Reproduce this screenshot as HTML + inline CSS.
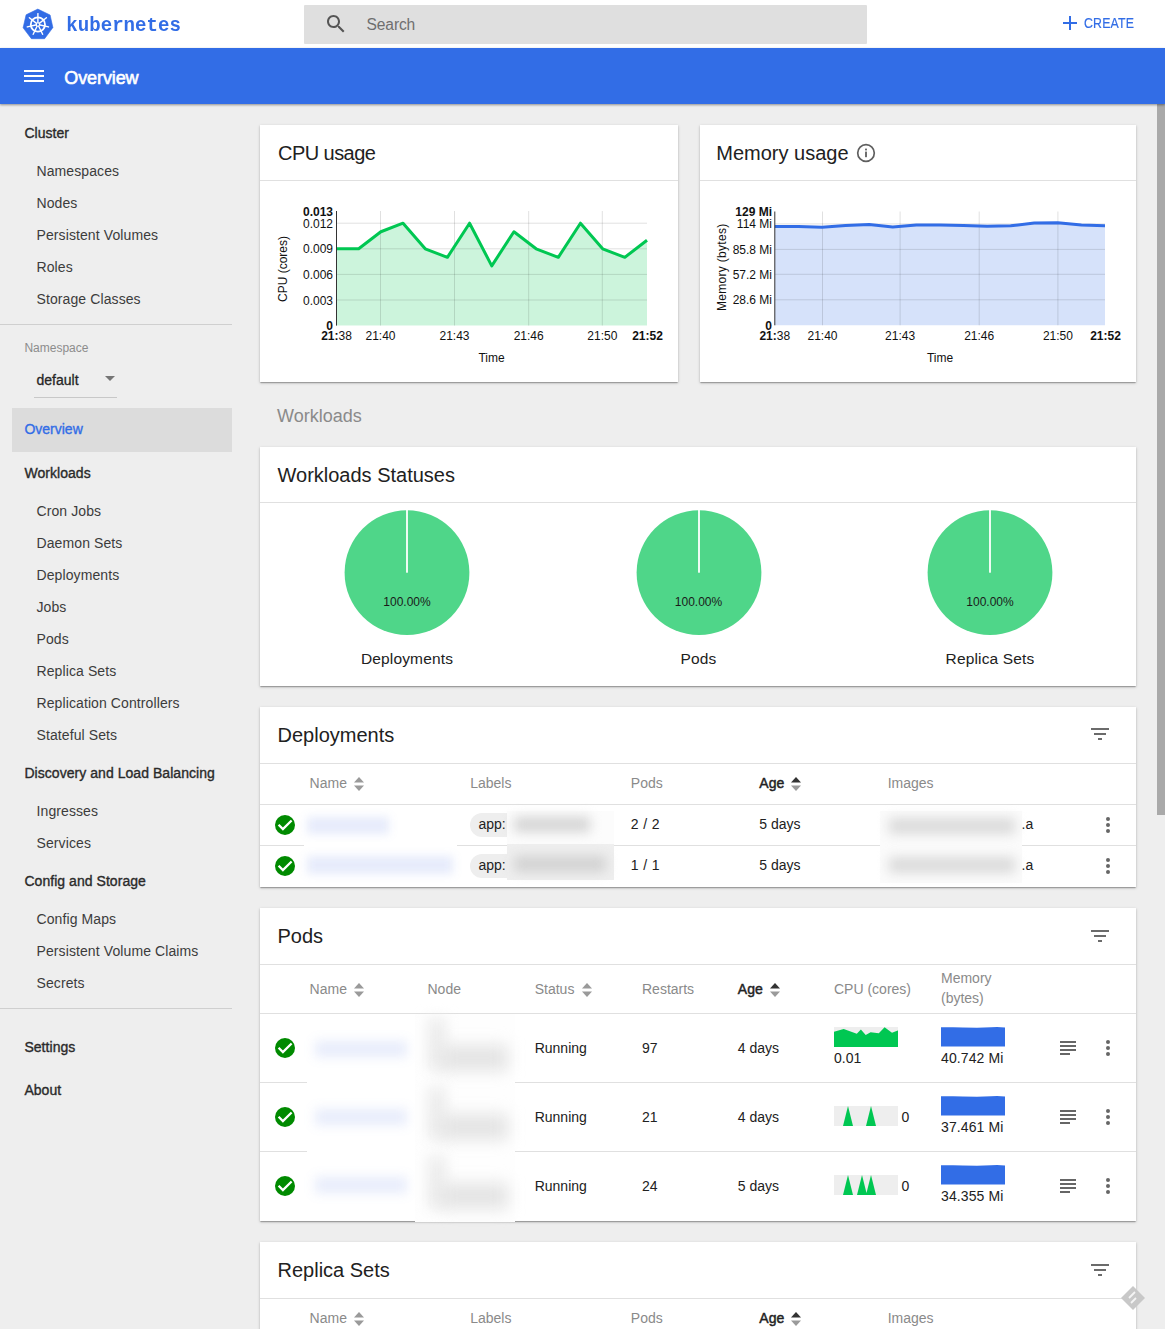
<!DOCTYPE html><html><head><meta charset="utf-8"><style>
html,body{margin:0;padding:0;}
body{width:1165px;height:1329px;overflow:hidden;position:relative;background:#eeeeee;font-family:"Liberation Sans", sans-serif;}
.t{position:absolute;white-space:nowrap;}
.r{position:absolute;}
.card{position:absolute;background:#fff;box-shadow:0 1px 3px 0 rgba(0,0,0,.2),0 1px 1px 0 rgba(0,0,0,.14),0 2px 1px -1px rgba(0,0,0,.12);}
svg{position:absolute;overflow:visible;}
</style></head><body>
<div class="r" style="left:0px;top:0px;width:1165px;height:48px;background:#fff;"></div><svg style="left:0;top:0" width="70" height="48" viewBox="0 0 70 48"><polygon points="37.8,9.1 50.1,15 52.9,27.6 44.6,38.7 31.4,38.7 23.1,27.8 26.1,14.8" fill="#326ce5" stroke="#326ce5" stroke-width="0.6" stroke-linejoin="round"/><g stroke="#fff" fill="none" stroke-linecap="round"><circle cx="37.9" cy="24.5" r="7.1" stroke-width="1.8"/><line x1="37.90" y1="22.30" x2="37.90" y2="13.60" stroke-width="1.4"/><line x1="39.62" y1="23.13" x2="46.42" y2="17.70" stroke-width="1.4"/><line x1="40.04" y1="24.99" x2="48.53" y2="26.93" stroke-width="1.4"/><line x1="38.85" y1="26.48" x2="42.63" y2="34.32" stroke-width="1.4"/><line x1="36.95" y1="26.48" x2="33.17" y2="34.32" stroke-width="1.4"/><line x1="35.76" y1="24.99" x2="27.27" y2="26.93" stroke-width="1.4"/><line x1="36.18" y1="23.13" x2="29.38" y2="17.70" stroke-width="1.4"/><circle cx="37.9" cy="24.5" r="1.6" stroke-width="1.3"/></g><circle cx="37.9" cy="24.5" r="0.9" fill="#326ce5"/></svg><div class="t" style="left:66.30px;top:14.25px;font-size:19.1px;line-height:25.1px;color:#326de6;font-weight:700;font-family:'Liberation Mono', monospace;transform:scaleY(1.06);transform-origin:0 80%;">kubernetes</div><div class="r" style="left:304px;top:5px;width:563px;height:39px;background:#dfdfdf;border-radius:1px;"></div><svg style="left:324px;top:12px" width="24" height="24" viewBox="0 0 24 24"><path fill="#555" d="M15.5 14h-.79l-.28-.27C15.41 12.59 16 11.11 16 9.5 16 5.91 13.09 3 9.5 3S3 5.91 3 9.5 5.91 16 9.5 16c1.61 0 3.09-.59 4.23-1.57l.27.28v.79l5 4.99L20.49 19l-4.99-5zm-6 0C7.01 14 5 11.99 5 9.5S7.01 5 9.5 5 14 7.01 14 9.5 11.99 14 9.5 14z"/></svg><div class="t" style="left:366.60px;top:13.70px;font-size:15.6px;line-height:21.6px;color:#6f6f6f;letter-spacing:-0.15px;">Search</div><div class="r" style="left:1062.5px;top:21.9px;width:14px;height:2px;background:#326de6;"></div><div class="r" style="left:1068.6px;top:15.9px;width:2px;height:14px;background:#326de6;"></div><div class="t" style="left:1084.30px;top:12.50px;font-size:14px;line-height:20px;color:#326de6;letter-spacing:0.2px;-webkit-text-stroke:0.2px #326de6;transform:scaleX(0.88);transform-origin:0 0;">CREATE</div><div class="r" style="left:0px;top:48px;width:1165px;height:56px;background:#326de6;box-shadow:0 1px 2px rgba(0,0,0,.3),0 1px 3px rgba(0,0,0,.12);z-index:2;"></div><div class="r" style="left:24.4px;top:70px;width:19.2px;height:2.1px;background:#fff;z-index:3;"></div><div class="r" style="left:24.4px;top:75px;width:19.2px;height:2.1px;background:#fff;z-index:3;"></div><div class="r" style="left:24.4px;top:80px;width:19.2px;height:2.1px;background:#fff;z-index:3;"></div><div class="t" style="left:64.30px;top:66.00px;font-size:18px;line-height:24px;color:#fff;letter-spacing:-0.1px;z-index:3;-webkit-text-stroke:0.6px #fff;">Overview</div><div class="r" style="left:1157px;top:104px;width:8px;height:711px;background:#a9a9a9;z-index:1;"></div><div class="t" style="left:24.40px;top:123.30px;font-size:14px;line-height:20px;color:#2a2a2a;letter-spacing:0.05px;-webkit-text-stroke:0.35px #2a2a2a;">Cluster</div><div class="t" style="left:36.50px;top:161.20px;font-size:14px;line-height:20px;color:#3c3c3c;letter-spacing:0.1px;">Namespaces</div><div class="t" style="left:36.50px;top:193.20px;font-size:14px;line-height:20px;color:#3c3c3c;letter-spacing:0.1px;">Nodes</div><div class="t" style="left:36.50px;top:225.20px;font-size:14px;line-height:20px;color:#3c3c3c;letter-spacing:0.1px;">Persistent Volumes</div><div class="t" style="left:36.50px;top:257.20px;font-size:14px;line-height:20px;color:#3c3c3c;letter-spacing:0.1px;">Roles</div><div class="t" style="left:36.50px;top:289.20px;font-size:14px;line-height:20px;color:#3c3c3c;letter-spacing:0.1px;">Storage Classes</div><div class="r" style="left:0px;top:324px;width:232px;height:1px;background:#cfcfcf;"></div><div class="t" style="left:24.40px;top:339.00px;font-size:12px;line-height:18px;color:#8c8c8c;">Namespace</div><div class="t" style="left:36.50px;top:370.20px;font-size:14px;line-height:20px;color:#262626;-webkit-text-stroke:0.3px #262626;">default</div><svg style="left:105px;top:376px" width="10" height="6"><polygon points="0,0 10,0 5,5" fill="#757575"/></svg><div class="r" style="left:34px;top:397px;width:83px;height:1px;background:#c8c8c8;"></div><div class="r" style="left:12px;top:408px;width:220px;height:43.5px;background:#dcdcdc;"></div><div class="t" style="left:24.40px;top:419.00px;font-size:14px;line-height:20px;color:#326de6;-webkit-text-stroke:0.35px #326de6;">Overview</div><div class="t" style="left:24.40px;top:462.90px;font-size:14px;line-height:20px;color:#2a2a2a;letter-spacing:0.05px;-webkit-text-stroke:0.35px #2a2a2a;">Workloads</div><div class="t" style="left:36.50px;top:500.80px;font-size:14px;line-height:20px;color:#3c3c3c;letter-spacing:0.1px;">Cron Jobs</div><div class="t" style="left:36.50px;top:532.80px;font-size:14px;line-height:20px;color:#3c3c3c;letter-spacing:0.1px;">Daemon Sets</div><div class="t" style="left:36.50px;top:564.80px;font-size:14px;line-height:20px;color:#3c3c3c;letter-spacing:0.1px;">Deployments</div><div class="t" style="left:36.50px;top:596.80px;font-size:14px;line-height:20px;color:#3c3c3c;letter-spacing:0.1px;">Jobs</div><div class="t" style="left:36.50px;top:628.80px;font-size:14px;line-height:20px;color:#3c3c3c;letter-spacing:0.1px;">Pods</div><div class="t" style="left:36.50px;top:660.80px;font-size:14px;line-height:20px;color:#3c3c3c;letter-spacing:0.1px;">Replica Sets</div><div class="t" style="left:36.50px;top:692.80px;font-size:14px;line-height:20px;color:#3c3c3c;letter-spacing:0.1px;">Replication Controllers</div><div class="t" style="left:36.50px;top:724.80px;font-size:14px;line-height:20px;color:#3c3c3c;letter-spacing:0.1px;">Stateful Sets</div><div class="t" style="left:24.40px;top:762.80px;font-size:14px;line-height:20px;color:#2a2a2a;letter-spacing:0.05px;-webkit-text-stroke:0.35px #2a2a2a;">Discovery and Load Balancing</div><div class="t" style="left:36.50px;top:800.80px;font-size:14px;line-height:20px;color:#3c3c3c;letter-spacing:0.1px;">Ingresses</div><div class="t" style="left:36.50px;top:832.80px;font-size:14px;line-height:20px;color:#3c3c3c;letter-spacing:0.1px;">Services</div><div class="t" style="left:24.40px;top:871.00px;font-size:14px;line-height:20px;color:#2a2a2a;letter-spacing:0.05px;-webkit-text-stroke:0.35px #2a2a2a;">Config and Storage</div><div class="t" style="left:36.50px;top:909.00px;font-size:14px;line-height:20px;color:#3c3c3c;letter-spacing:0.1px;">Config Maps</div><div class="t" style="left:36.50px;top:941.00px;font-size:14px;line-height:20px;color:#3c3c3c;letter-spacing:0.1px;">Persistent Volume Claims</div><div class="t" style="left:36.50px;top:973.00px;font-size:14px;line-height:20px;color:#3c3c3c;letter-spacing:0.1px;">Secrets</div><div class="r" style="left:0px;top:1008px;width:232px;height:1px;background:#cfcfcf;"></div><div class="t" style="left:24.40px;top:1036.50px;font-size:14px;line-height:20px;color:#2a2a2a;letter-spacing:0.05px;-webkit-text-stroke:0.35px #2a2a2a;">Settings</div><div class="t" style="left:24.40px;top:1079.80px;font-size:14px;line-height:20px;color:#2a2a2a;letter-spacing:0.05px;-webkit-text-stroke:0.35px #2a2a2a;">About</div><div class="card" style="left:260.3px;top:124.5px;width:418px;height:257px;"></div><div class="t" style="left:278.00px;top:139.80px;font-size:20px;line-height:26px;color:#212121;letter-spacing:-0.55px;">CPU usage</div><div class="r" style="left:260.3px;top:180px;width:418px;height:1px;background:#e0e0e0;"></div><div class="card" style="left:699.8px;top:124.5px;width:436.5px;height:257px;"></div><div class="t" style="left:716.30px;top:139.80px;font-size:20px;line-height:26px;color:#212121;">Memory usage</div><div class="r" style="left:699.8px;top:180px;width:436.5px;height:1px;background:#e0e0e0;"></div><svg style="left:856px;top:143px" width="20" height="20" viewBox="0 0 20 20"><circle cx="10" cy="10" r="8.3" fill="none" stroke="#5f5f5f" stroke-width="1.7"/><rect x="9.1" y="8.6" width="1.8" height="5.6" fill="#5f5f5f"/><rect x="9.1" y="5.6" width="1.8" height="1.8" fill="#5f5f5f"/></svg><svg style="left:0;top:0" width="1165" height="400"><path d="M336.50,248.80 L358.68,248.80 L380.86,231.73 L403.04,223.20 L425.21,248.80 L447.39,257.33 L469.57,223.20 L491.75,265.87 L513.93,231.73 L536.11,248.80 L558.29,257.33 L580.46,223.20 L602.64,248.80 L624.82,257.33 L647.00,240.27 L647.00,325.6 L336.50,325.6 Z" fill="rgba(0,199,82,0.2)"/><line x1="336.5" y1="300.0" x2="647" y2="300.0" stroke="rgba(0,0,0,0.12)" stroke-width="1"/><line x1="336.5" y1="274.40000000000003" x2="647" y2="274.40000000000003" stroke="rgba(0,0,0,0.12)" stroke-width="1"/><line x1="336.5" y1="248.8" x2="647" y2="248.8" stroke="rgba(0,0,0,0.12)" stroke-width="1"/><line x1="336.5" y1="223.20000000000002" x2="647" y2="223.20000000000002" stroke="rgba(0,0,0,0.12)" stroke-width="1"/><line x1="380.5" y1="211" x2="380.5" y2="325.6" stroke="rgba(0,0,0,0.12)" stroke-width="1"/><line x1="454.5" y1="211" x2="454.5" y2="325.6" stroke="rgba(0,0,0,0.12)" stroke-width="1"/><line x1="528.7" y1="211" x2="528.7" y2="325.6" stroke="rgba(0,0,0,0.12)" stroke-width="1"/><line x1="602.3" y1="211" x2="602.3" y2="325.6" stroke="rgba(0,0,0,0.12)" stroke-width="1"/><path d="M336.50,248.80 L358.68,248.80 L380.86,231.73 L403.04,223.20 L425.21,248.80 L447.39,257.33 L469.57,223.20 L491.75,265.87 L513.93,231.73 L536.11,248.80 L558.29,257.33 L580.46,223.20 L602.64,248.80 L624.82,257.33 L647.00,240.27" fill="none" stroke="#00c752" stroke-width="3" stroke-linejoin="round"/><line x1="336.5" y1="211" x2="336.5" y2="325.6" stroke="#333" stroke-width="1"/></svg><div class="t" style="right:832.00px;text-align:right;top:291.50px;font-size:12px;line-height:18px;color:#111;">0.003</div><div class="t" style="right:832.00px;text-align:right;top:265.90px;font-size:12px;line-height:18px;color:#111;">0.006</div><div class="t" style="right:832.00px;text-align:right;top:240.30px;font-size:12px;line-height:18px;color:#111;">0.009</div><div class="t" style="right:832.00px;text-align:right;top:214.70px;font-size:12px;line-height:18px;color:#111;">0.012</div><div class="t" style="right:832.00px;text-align:right;top:202.50px;font-size:12px;line-height:18px;color:#111;font-weight:700;">0.013</div><div class="t" style="right:832.00px;text-align:right;top:316.50px;font-size:12px;line-height:18px;color:#111;font-weight:700;">0</div><div class="t" style="left:80.50px;width:600px;text-align:center;top:327.00px;font-size:12px;line-height:18px;color:#111;">21:40</div><div class="t" style="left:154.50px;width:600px;text-align:center;top:327.00px;font-size:12px;line-height:18px;color:#111;">21:43</div><div class="t" style="left:228.70px;width:600px;text-align:center;top:327.00px;font-size:12px;line-height:18px;color:#111;">21:46</div><div class="t" style="left:302.30px;width:600px;text-align:center;top:327.00px;font-size:12px;line-height:18px;color:#111;">21:50</div><div class="t" style="left:36.50px;width:600px;text-align:center;top:327.00px;font-size:12px;line-height:18px;color:#111;"><b>21:</b>38</div><div class="t" style="left:347.50px;width:600px;text-align:center;top:327.00px;font-size:12px;line-height:18px;color:#111;font-weight:700;">21:52</div><div class="t" style="left:191.50px;width:600px;text-align:center;top:349.00px;font-size:12px;line-height:18px;color:#111;">Time</div><div class="t" style="left:274.00px;top:288.50px;font-size:12px;line-height:18px;color:#111;transform:rotate(-90deg);transform-origin:0 0;left:274px;top:301.5px;">CPU (cores)</div><svg style="left:0;top:0" width="1165" height="400"><path d="M774.80,226.50 L798.39,226.50 L821.97,227.30 L845.56,225.40 L869.14,224.60 L892.73,226.90 L916.31,225.00 L939.90,225.00 L963.49,225.40 L987.07,226.20 L1010.66,225.80 L1034.24,223.10 L1057.83,222.70 L1081.41,225.00 L1105.00,225.80 L1105.00,325.3 L774.80,325.3 Z" fill="rgba(50,109,230,0.2)"/><line x1="774.8" y1="299.8" x2="1105" y2="299.8" stroke="rgba(0,0,0,0.12)" stroke-width="1"/><line x1="774.8" y1="274.3" x2="1105" y2="274.3" stroke="rgba(0,0,0,0.12)" stroke-width="1"/><line x1="774.8" y1="249.4" x2="1105" y2="249.4" stroke="rgba(0,0,0,0.12)" stroke-width="1"/><line x1="774.8" y1="223.9" x2="1105" y2="223.9" stroke="rgba(0,0,0,0.12)" stroke-width="1"/><line x1="822.5" y1="211.5" x2="822.5" y2="325.3" stroke="rgba(0,0,0,0.12)" stroke-width="1"/><line x1="900.1" y1="211.5" x2="900.1" y2="325.3" stroke="rgba(0,0,0,0.12)" stroke-width="1"/><line x1="979.2" y1="211.5" x2="979.2" y2="325.3" stroke="rgba(0,0,0,0.12)" stroke-width="1"/><line x1="1057.9" y1="211.5" x2="1057.9" y2="325.3" stroke="rgba(0,0,0,0.12)" stroke-width="1"/><path d="M774.80,226.50 L798.39,226.50 L821.97,227.30 L845.56,225.40 L869.14,224.60 L892.73,226.90 L916.31,225.00 L939.90,225.00 L963.49,225.40 L987.07,226.20 L1010.66,225.80 L1034.24,223.10 L1057.83,222.70 L1081.41,225.00 L1105.00,225.80" fill="none" stroke="#326de6" stroke-width="3" stroke-linejoin="round"/><line x1="774.8" y1="211.5" x2="774.8" y2="325.3" stroke="#333" stroke-width="1"/></svg><div class="t" style="right:393.00px;text-align:right;top:291.30px;font-size:12px;line-height:18px;color:#111;">28.6 Mi</div><div class="t" style="right:393.00px;text-align:right;top:265.80px;font-size:12px;line-height:18px;color:#111;">57.2 Mi</div><div class="t" style="right:393.00px;text-align:right;top:240.90px;font-size:12px;line-height:18px;color:#111;">85.8 Mi</div><div class="t" style="right:393.00px;text-align:right;top:215.40px;font-size:12px;line-height:18px;color:#111;">114 Mi</div><div class="t" style="right:393.00px;text-align:right;top:202.50px;font-size:12px;line-height:18px;color:#111;font-weight:700;">129 Mi</div><div class="t" style="right:393.00px;text-align:right;top:316.50px;font-size:12px;line-height:18px;color:#111;font-weight:700;">0</div><div class="t" style="left:522.50px;width:600px;text-align:center;top:327.00px;font-size:12px;line-height:18px;color:#111;">21:40</div><div class="t" style="left:600.10px;width:600px;text-align:center;top:327.00px;font-size:12px;line-height:18px;color:#111;">21:43</div><div class="t" style="left:679.20px;width:600px;text-align:center;top:327.00px;font-size:12px;line-height:18px;color:#111;">21:46</div><div class="t" style="left:757.90px;width:600px;text-align:center;top:327.00px;font-size:12px;line-height:18px;color:#111;">21:50</div><div class="t" style="left:474.80px;width:600px;text-align:center;top:327.00px;font-size:12px;line-height:18px;color:#111;"><b>21:</b>38</div><div class="t" style="left:805.50px;width:600px;text-align:center;top:327.00px;font-size:12px;line-height:18px;color:#111;font-weight:700;">21:52</div><div class="t" style="left:640.00px;width:600px;text-align:center;top:349.00px;font-size:12px;line-height:18px;color:#111;">Time</div><div class="t" style="left:713.00px;top:297.50px;font-size:12px;line-height:18px;color:#111;letter-spacing:0.3px;transform:rotate(-90deg);transform-origin:0 0;left:713px;top:310.5px;">Memory (bytes)</div><div class="t" style="left:277.00px;top:403.50px;font-size:18px;line-height:24px;color:#8a8a8a;">Workloads</div><div class="card" style="left:260.3px;top:446.5px;width:876px;height:239.5px;"></div><div class="t" style="left:277.50px;top:462.00px;font-size:20px;line-height:26px;color:#212121;">Workloads Statuses</div><div class="r" style="left:260.3px;top:502px;width:876px;height:1px;background:#e0e0e0;"></div><svg style="left:344px;top:510.4px" width="126" height="126"><circle cx="63" cy="62.7" r="62.4" fill="#4fd689"/><rect x="62.1" y="0" width="1.8" height="62.7" fill="#fff"/></svg><div class="t" style="left:107.00px;width:600px;text-align:center;top:592.60px;font-size:12px;line-height:18px;color:#1a1a1a;">100.00%</div><div class="t" style="left:107.00px;width:600px;text-align:center;top:647.55px;font-size:15.5px;line-height:21.5px;color:#212121;letter-spacing:0.15px;">Deployments</div><svg style="left:635.5px;top:510.4px" width="126" height="126"><circle cx="63" cy="62.7" r="62.4" fill="#4fd689"/><rect x="62.1" y="0" width="1.8" height="62.7" fill="#fff"/></svg><div class="t" style="left:398.50px;width:600px;text-align:center;top:592.60px;font-size:12px;line-height:18px;color:#1a1a1a;">100.00%</div><div class="t" style="left:398.50px;width:600px;text-align:center;top:647.55px;font-size:15.5px;line-height:21.5px;color:#212121;letter-spacing:0.15px;">Pods</div><svg style="left:927px;top:510.4px" width="126" height="126"><circle cx="63" cy="62.7" r="62.4" fill="#4fd689"/><rect x="62.1" y="0" width="1.8" height="62.7" fill="#fff"/></svg><div class="t" style="left:690.00px;width:600px;text-align:center;top:592.60px;font-size:12px;line-height:18px;color:#1a1a1a;">100.00%</div><div class="t" style="left:690.00px;width:600px;text-align:center;top:647.55px;font-size:15.5px;line-height:21.5px;color:#212121;letter-spacing:0.15px;">Replica Sets</div><div class="card" style="left:260.3px;top:706.5px;width:876px;height:180px;"></div><div class="t" style="left:277.50px;top:721.50px;font-size:20px;line-height:26px;color:#212121;">Deployments</div><div class="r" style="left:1091px;top:728px;width:18px;height:2px;background:#6b6b6b;"></div><div class="r" style="left:1094px;top:733px;width:12px;height:2px;background:#6b6b6b;"></div><div class="r" style="left:1098px;top:738px;width:4px;height:2px;background:#6b6b6b;"></div><div class="r" style="left:260.3px;top:763px;width:876px;height:1px;background:#e0e0e0;"></div><div class="t" style="left:309.60px;top:773.00px;font-size:14px;line-height:20px;color:#8a8a8a;">Name</div><svg style="left:354px;top:777px" width="10" height="14" viewBox="0 0 10 14"><polygon points="0,5.5 5,0 10,5.5" fill="#9a9a9a"/><polygon points="0,8.5 5,14 10,8.5" fill="#9a9a9a"/></svg><div class="t" style="left:470.20px;top:773.00px;font-size:14px;line-height:20px;color:#8a8a8a;">Labels</div><div class="t" style="left:630.80px;top:773.00px;font-size:14px;line-height:20px;color:#8a8a8a;">Pods</div><div class="t" style="left:759.30px;top:773.00px;font-size:14px;line-height:20px;color:#222;letter-spacing:0.1px;-webkit-text-stroke:0.45px #222;">Age</div><svg style="left:790.5px;top:777px" width="10" height="14" viewBox="0 0 10 14"><polygon points="0,5.5 5,0 10,5.5" fill="#333"/><polygon points="0,8.5 5,14 10,8.5" fill="#9a9a9a"/></svg><div class="t" style="left:887.70px;top:773.00px;font-size:14px;line-height:20px;color:#8a8a8a;">Images</div><div class="r" style="left:260.3px;top:804px;width:876px;height:1px;background:#e0e0e0;"></div><div class="r" style="left:260.3px;top:845px;width:876px;height:1px;background:#e0e0e0;"></div><svg style="left:275px;top:815px" width="20" height="20" viewBox="0 0 20 20"><circle cx="10" cy="10" r="10" fill="#008a00"/><path d="M3.6 9.8 L7.9 14.1 L16.6 5.5" fill="none" stroke="#fff" stroke-width="2.3"/></svg><div class="r" style="left:470px;top:813px;width:140px;height:24px;border-radius:12px;background:#eeeeee"></div><div class="t" style="left:478.50px;top:814.00px;font-size:14px;line-height:20px;color:#222;">app:</div><div class="t" style="left:630.80px;top:814.00px;font-size:14px;line-height:20px;color:#212121;letter-spacing:0.35px;">2 / 2</div><div class="t" style="left:759.30px;top:814.00px;font-size:14px;line-height:20px;color:#212121;">5 days</div><div class="t" style="left:1021.50px;top:814.00px;font-size:14px;line-height:20px;color:#212121;">.a</div><div class="r" style="left:1106px;top:817px;width:4px;height:4px;border-radius:50%;background:#666"></div><div class="r" style="left:1106px;top:823px;width:4px;height:4px;border-radius:50%;background:#666"></div><div class="r" style="left:1106px;top:829px;width:4px;height:4px;border-radius:50%;background:#666"></div><svg style="left:275px;top:856px" width="20" height="20" viewBox="0 0 20 20"><circle cx="10" cy="10" r="10" fill="#008a00"/><path d="M3.6 9.8 L7.9 14.1 L16.6 5.5" fill="none" stroke="#fff" stroke-width="2.3"/></svg><div class="r" style="left:470px;top:854px;width:140px;height:24px;border-radius:12px;background:#eeeeee"></div><div class="t" style="left:478.50px;top:855.00px;font-size:14px;line-height:20px;color:#222;">app:</div><div class="t" style="left:630.80px;top:855.00px;font-size:14px;line-height:20px;color:#212121;letter-spacing:0.35px;">1 / 1</div><div class="t" style="left:759.30px;top:855.00px;font-size:14px;line-height:20px;color:#212121;">5 days</div><div class="t" style="left:1021.50px;top:855.00px;font-size:14px;line-height:20px;color:#212121;">.a</div><div class="r" style="left:1106px;top:858px;width:4px;height:4px;border-radius:50%;background:#666"></div><div class="r" style="left:1106px;top:864px;width:4px;height:4px;border-radius:50%;background:#666"></div><div class="r" style="left:1106px;top:870px;width:4px;height:4px;border-radius:50%;background:#666"></div><div class="r" style="left:304px;top:813px;width:88px;height:28px;background:#fff;"></div><div class="r" style="left:307px;top:817px;width:82px;height:17px;background:rgba(60,100,225,0.13);filter:blur(5px)"></div><div class="r" style="left:304px;top:842px;width:153px;height:39px;background:#fff;"></div><div class="r" style="left:307px;top:856px;width:146px;height:18px;background:rgba(60,100,225,0.13);filter:blur(5px)"></div><div class="r" style="left:507px;top:811px;width:107px;height:33px;background:#fcfcfc;"></div><div class="r" style="left:514px;top:817px;width:76px;height:15px;background:#d4d4d4;filter:blur(6px)"></div><div class="r" style="left:507px;top:844px;width:107px;height:36px;background:#efefef;"></div><div class="r" style="left:514px;top:856px;width:92px;height:16px;background:#d2d2d2;filter:blur(6px)"></div><div class="r" style="left:880px;top:811px;width:142px;height:72px;background:#fbfbfb;"></div><div class="r" style="left:889px;top:818px;width:126px;height:16px;background:#dadada;filter:blur(6px)"></div><div class="r" style="left:889px;top:857px;width:126px;height:16px;background:#dadada;filter:blur(6px)"></div><div class="card" style="left:260.3px;top:907.5px;width:876px;height:313px;"></div><div class="t" style="left:277.50px;top:922.80px;font-size:20px;line-height:26px;color:#212121;">Pods</div><div class="r" style="left:1091px;top:930px;width:18px;height:2px;background:#6b6b6b;"></div><div class="r" style="left:1094px;top:935px;width:12px;height:2px;background:#6b6b6b;"></div><div class="r" style="left:1098px;top:940px;width:4px;height:2px;background:#6b6b6b;"></div><div class="r" style="left:260.3px;top:964px;width:876px;height:1px;background:#e0e0e0;"></div><div class="t" style="left:309.60px;top:978.50px;font-size:14px;line-height:20px;color:#8a8a8a;">Name</div><svg style="left:354px;top:982.5px" width="10" height="14" viewBox="0 0 10 14"><polygon points="0,5.5 5,0 10,5.5" fill="#9a9a9a"/><polygon points="0,8.5 5,14 10,8.5" fill="#9a9a9a"/></svg><div class="t" style="left:427.50px;top:978.50px;font-size:14px;line-height:20px;color:#8a8a8a;">Node</div><div class="t" style="left:534.70px;top:978.50px;font-size:14px;line-height:20px;color:#8a8a8a;">Status</div><svg style="left:582px;top:982.5px" width="10" height="14" viewBox="0 0 10 14"><polygon points="0,5.5 5,0 10,5.5" fill="#9a9a9a"/><polygon points="0,8.5 5,14 10,8.5" fill="#9a9a9a"/></svg><div class="t" style="left:642.00px;top:978.50px;font-size:14px;line-height:20px;color:#8a8a8a;">Restarts</div><div class="t" style="left:737.80px;top:978.50px;font-size:14px;line-height:20px;color:#222;letter-spacing:0.1px;-webkit-text-stroke:0.45px #222;">Age</div><svg style="left:769.5px;top:982.5px" width="10" height="14" viewBox="0 0 10 14"><polygon points="0,5.5 5,0 10,5.5" fill="#333"/><polygon points="0,8.5 5,14 10,8.5" fill="#9a9a9a"/></svg><div class="t" style="left:834.00px;top:978.50px;font-size:14px;line-height:20px;color:#8a8a8a;">CPU (cores)</div><div class="t" style="left:941.00px;top:968.00px;font-size:14px;line-height:20px;color:#8a8a8a;">Memory</div><div class="t" style="left:941.00px;top:988.00px;font-size:14px;line-height:20px;color:#8a8a8a;">(bytes)</div><div class="r" style="left:260.3px;top:1013px;width:876px;height:1px;background:#e0e0e0;"></div><div class="r" style="left:260.3px;top:1082px;width:876px;height:1px;background:#e0e0e0;"></div><div class="r" style="left:260.3px;top:1151px;width:876px;height:1px;background:#e0e0e0;"></div><svg style="left:275px;top:1038px" width="20" height="20" viewBox="0 0 20 20"><circle cx="10" cy="10" r="10" fill="#008a00"/><path d="M3.6 9.8 L7.9 14.1 L16.6 5.5" fill="none" stroke="#fff" stroke-width="2.3"/></svg><div class="t" style="left:534.70px;top:1038.00px;font-size:14px;line-height:20px;color:#212121;">Running</div><div class="t" style="left:642.00px;top:1038.00px;font-size:14px;line-height:20px;color:#212121;">97</div><div class="t" style="left:737.80px;top:1038.00px;font-size:14px;line-height:20px;color:#212121;">4 days</div><div class="r" style="left:1060px;top:1041px;width:16px;height:2px;background:#666;"></div><div class="r" style="left:1060px;top:1045px;width:16px;height:2px;background:#666;"></div><div class="r" style="left:1060px;top:1049px;width:16px;height:2px;background:#666;"></div><div class="r" style="left:1060px;top:1053px;width:10px;height:2px;background:#666;"></div><div class="r" style="left:1106px;top:1040px;width:4px;height:4px;border-radius:50%;background:#666"></div><div class="r" style="left:1106px;top:1046px;width:4px;height:4px;border-radius:50%;background:#666"></div><div class="r" style="left:1106px;top:1052px;width:4px;height:4px;border-radius:50%;background:#666"></div><svg style="left:941px;top:1026.7px" width="64" height="20" viewBox="0 0 64 20"><path d="M0,0.3 L12,0.2 L22,0.5 L36,0.7 L50,0.2 L56,0 L64,0.4 L64,19.6 L0,19.6Z" fill="#326de6"/></svg><div class="t" style="left:941.00px;top:1047.70px;font-size:14px;line-height:20px;color:#212121;letter-spacing:0.1px;">40.742 Mi</div><svg style="left:275px;top:1107px" width="20" height="20" viewBox="0 0 20 20"><circle cx="10" cy="10" r="10" fill="#008a00"/><path d="M3.6 9.8 L7.9 14.1 L16.6 5.5" fill="none" stroke="#fff" stroke-width="2.3"/></svg><div class="t" style="left:534.70px;top:1107.00px;font-size:14px;line-height:20px;color:#212121;">Running</div><div class="t" style="left:642.00px;top:1107.00px;font-size:14px;line-height:20px;color:#212121;">21</div><div class="t" style="left:737.80px;top:1107.00px;font-size:14px;line-height:20px;color:#212121;">4 days</div><div class="r" style="left:1060px;top:1110px;width:16px;height:2px;background:#666;"></div><div class="r" style="left:1060px;top:1114px;width:16px;height:2px;background:#666;"></div><div class="r" style="left:1060px;top:1118px;width:16px;height:2px;background:#666;"></div><div class="r" style="left:1060px;top:1122px;width:10px;height:2px;background:#666;"></div><div class="r" style="left:1106px;top:1109px;width:4px;height:4px;border-radius:50%;background:#666"></div><div class="r" style="left:1106px;top:1115px;width:4px;height:4px;border-radius:50%;background:#666"></div><div class="r" style="left:1106px;top:1121px;width:4px;height:4px;border-radius:50%;background:#666"></div><svg style="left:941px;top:1095.7px" width="64" height="20" viewBox="0 0 64 20"><path d="M0,0.3 L12,0.2 L22,0.5 L36,0.7 L50,0.2 L56,0 L64,0.4 L64,19.6 L0,19.6Z" fill="#326de6"/></svg><div class="t" style="left:941.00px;top:1116.70px;font-size:14px;line-height:20px;color:#212121;letter-spacing:0.1px;">37.461 Mi</div><svg style="left:275px;top:1176px" width="20" height="20" viewBox="0 0 20 20"><circle cx="10" cy="10" r="10" fill="#008a00"/><path d="M3.6 9.8 L7.9 14.1 L16.6 5.5" fill="none" stroke="#fff" stroke-width="2.3"/></svg><div class="t" style="left:534.70px;top:1176.00px;font-size:14px;line-height:20px;color:#212121;">Running</div><div class="t" style="left:642.00px;top:1176.00px;font-size:14px;line-height:20px;color:#212121;">24</div><div class="t" style="left:737.80px;top:1176.00px;font-size:14px;line-height:20px;color:#212121;">5 days</div><div class="r" style="left:1060px;top:1179px;width:16px;height:2px;background:#666;"></div><div class="r" style="left:1060px;top:1183px;width:16px;height:2px;background:#666;"></div><div class="r" style="left:1060px;top:1187px;width:16px;height:2px;background:#666;"></div><div class="r" style="left:1060px;top:1191px;width:10px;height:2px;background:#666;"></div><div class="r" style="left:1106px;top:1178px;width:4px;height:4px;border-radius:50%;background:#666"></div><div class="r" style="left:1106px;top:1184px;width:4px;height:4px;border-radius:50%;background:#666"></div><div class="r" style="left:1106px;top:1190px;width:4px;height:4px;border-radius:50%;background:#666"></div><svg style="left:941px;top:1164.7px" width="64" height="20" viewBox="0 0 64 20"><path d="M0,0.3 L12,0.2 L22,0.5 L36,0.7 L50,0.2 L56,0 L64,0.4 L64,19.6 L0,19.6Z" fill="#326de6"/></svg><div class="t" style="left:941.00px;top:1185.70px;font-size:14px;line-height:20px;color:#212121;letter-spacing:0.1px;">34.355 Mi</div><svg style="left:834px;top:1027px" width="64" height="20" viewBox="0 0 64 20"><rect width="64" height="20" fill="#eee"/><path d="M0,20 L0,4.7 L9.7,2 L22.8,6.8 L26.9,2.4 L31.7,8 L36.6,5.2 L44.8,6.3 L50.6,0.3 L58,5.7 L63.8,3.6 L64,3.6 L64,20 Z" fill="#00c752"/></svg><div class="t" style="left:834.00px;top:1048.00px;font-size:14px;line-height:20px;color:#212121;">0.01</div><svg style="left:834px;top:1106px" width="64" height="20" viewBox="0 0 64 20"><rect width="64" height="20" fill="#eee"/><path d="M9,20 L14,0 L19,20 Z M32,20 L37,0 L42,20Z" fill="#00c752"/></svg><div class="t" style="left:901.50px;top:1107.00px;font-size:14px;line-height:20px;color:#212121;">0</div><svg style="left:834px;top:1175px" width="64" height="20" viewBox="0 0 64 20"><rect width="64" height="20" fill="#eee"/><path d="M9,20 L14,0 L19,20 Z M23,20 L28,0 L33,20Z M32,20 L37,0 L42,20Z" fill="#00c752"/></svg><div class="t" style="left:901.50px;top:1176.00px;font-size:14px;line-height:20px;color:#212121;">0</div><div class="r" style="left:307px;top:1014px;width:108px;height:207px;background:#fff;"></div><div class="r" style="left:315px;top:1041px;width:92px;height:16px;background:rgba(60,100,225,0.12);filter:blur(6px)"></div><div class="r" style="left:315px;top:1109px;width:92px;height:16px;background:rgba(60,100,225,0.12);filter:blur(6px)"></div><div class="r" style="left:315px;top:1177px;width:92px;height:16px;background:rgba(60,100,225,0.12);filter:blur(6px)"></div><div class="r" style="left:415px;top:1014px;width:100px;height:208px;background:#fefefe;"></div><div class="r" style="left:428px;top:1018px;width:18px;height:52px;background:#ececec;filter:blur(7px)"></div><div class="r" style="left:440px;top:1045px;width:68px;height:26px;background:#e4e4e4;filter:blur(8px)"></div><div class="r" style="left:428px;top:1087px;width:18px;height:52px;background:#ececec;filter:blur(7px)"></div><div class="r" style="left:440px;top:1114px;width:68px;height:26px;background:#e4e4e4;filter:blur(8px)"></div><div class="r" style="left:428px;top:1156px;width:18px;height:52px;background:#ececec;filter:blur(7px)"></div><div class="r" style="left:440px;top:1183px;width:68px;height:26px;background:#e4e4e4;filter:blur(8px)"></div><div class="card" style="left:260.3px;top:1241.5px;width:876px;height:120px;"></div><div class="t" style="left:277.50px;top:1257.00px;font-size:20px;line-height:26px;color:#212121;">Replica Sets</div><div class="r" style="left:1091px;top:1264px;width:18px;height:2px;background:#6b6b6b;"></div><div class="r" style="left:1094px;top:1269px;width:12px;height:2px;background:#6b6b6b;"></div><div class="r" style="left:1098px;top:1274px;width:4px;height:2px;background:#6b6b6b;"></div><div class="r" style="left:260.3px;top:1298px;width:876px;height:1px;background:#e0e0e0;"></div><div class="t" style="left:309.60px;top:1308.00px;font-size:14px;line-height:20px;color:#8a8a8a;">Name</div><svg style="left:354px;top:1312px" width="10" height="14" viewBox="0 0 10 14"><polygon points="0,5.5 5,0 10,5.5" fill="#9a9a9a"/><polygon points="0,8.5 5,14 10,8.5" fill="#9a9a9a"/></svg><div class="t" style="left:470.20px;top:1308.00px;font-size:14px;line-height:20px;color:#8a8a8a;">Labels</div><div class="t" style="left:630.80px;top:1308.00px;font-size:14px;line-height:20px;color:#8a8a8a;">Pods</div><div class="t" style="left:759.30px;top:1308.00px;font-size:14px;line-height:20px;color:#222;letter-spacing:0.1px;-webkit-text-stroke:0.45px #222;">Age</div><svg style="left:790.5px;top:1312px" width="10" height="14" viewBox="0 0 10 14"><polygon points="0,5.5 5,0 10,5.5" fill="#333"/><polygon points="0,8.5 5,14 10,8.5" fill="#9a9a9a"/></svg><div class="t" style="left:887.70px;top:1308.00px;font-size:14px;line-height:20px;color:#8a8a8a;">Images</div><svg style="left:1121px;top:1286px" width="24" height="24" viewBox="0 0 24 24"><polygon points="12,0 24,12 12,24 0,12" fill="#c8c8c8"/><line x1="8" y1="12" x2="14" y2="6" stroke="#f4f4f4" stroke-width="1.8"/><line x1="10" y1="17" x2="15" y2="12" stroke="#f4f4f4" stroke-width="1.8"/></svg></body></html>
